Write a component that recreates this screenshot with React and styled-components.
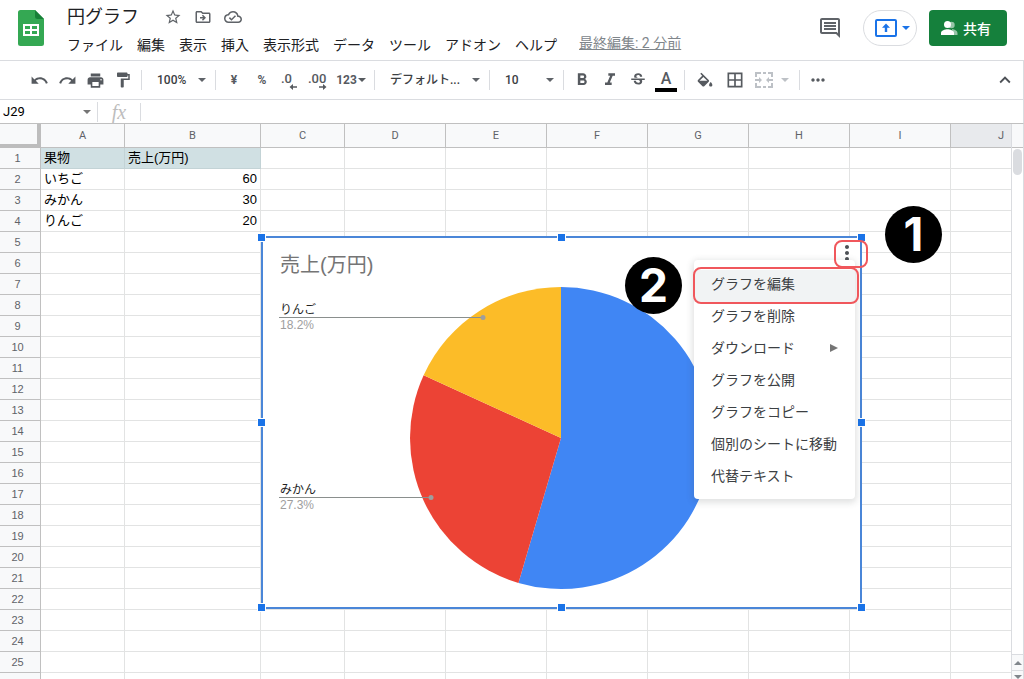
import { useState } from "react";
import styled, { createGlobalStyle } from "styled-components";
import {
    MdUndo, MdRedo, MdPrint, MdFormatPaint, MdFormatBold, MdFormatItalic, MdStrikethroughS,
    MdBorderAll, MdMoreHoriz, MdMoreVert, MdKeyboardArrowUp,
    MdStarBorder, MdOutlineDriveFileMove, MdOutlineCloudDone, MdOutlineComment,
} from "react-icons/md";

const MENUS = ["ファイル", "編集", "表示", "挿入", "表示形式", "データ", "ツール", "アドオン", "ヘルプ"];

const COLUMNS = [
    { name: "A", width: 84 },
    { name: "B", width: 136 },
    { name: "C", width: 84 },
    { name: "D", width: 101 },
    { name: "E", width: 101 },
    { name: "F", width: 101 },
    { name: "G", width: 101 },
    { name: "H", width: 101 },
    { name: "I", width: 101 },
    { name: "J", width: 101 },
];

const ROWS = Array.from({ length: 26 }, (_, i) => i + 1);

const CELLS = {
    A1: "果物", B1: "売上(万円)",
    A2: "いちご", B2: 60,
    A3: "みかん", B3: 30,
    A4: "りんご", B4: 20,
};

const SLICES = [
    { name: "いちご", value: 60, color: "#4086f4" },
    { name: "みかん", value: 30, color: "#ec4335", label: { y: 258, x: 168 } },
    { name: "りんご", value: 20, color: "#fcbc28", label: { y: 78, x: 220 } },
];

const CHART_MENU = [
    "グラフを編集", "グラフを削除", "ダウンロード", "グラフを公開",
    "グラフをコピー", "個別のシートに移動", "代替テキスト",
];

const HANDLES = [
    [0, 0], [50, 0], [100, 0],
    [0, 50], [100, 50],
    [0, 100], [50, 100], [100, 100],
];

function Caret({ up }) {
    return (
        <svg width="8" height="4" viewBox="0 0 8 4" fill="currentColor" aria-hidden="true">
            <path d={up ? "M0 4h8L4 0z" : "M0 0h8L4 4z"} />
        </svg>
    );
}

function SheetsLogo() {
    return (
        <svg width="26" height="36" viewBox="0 0 26 36" aria-hidden="true">
            <path d="M2.5 0H17l9 9v24.500a2.500 2.500 0 0 1-2.500 2.500h-21A2.500 2.500 0 0 1 0 33.500v-31A2.500 2.500 0 0 1 2.500 0z" fill="#34a853" />
            <path d="M17 0l9 9h-6.500A2.500 2.500 0 0 1 17 6.500z" fill="#188038" />
            <path d="M5 14v12h16V14zm2 2h5v3H7zm7 0h5v3h-5zm-7 5h5v3H7zm7 0h5v3h-5z" fill="#fff" fillRule="evenodd" />
        </svg>
    );
}

function PresentIcon() {
    return (
        <svg width="22" height="18" viewBox="0 0 22 18" aria-hidden="true">
            <rect x="1" y="1" width="20" height="16" rx="1" fill="none" stroke="#1a73e8" strokeWidth="2" />
            <path d="M11 4.500l4 4.200h-2.800V13H9.800V8.700H7z" fill="#1a73e8" />
        </svg>
    );
}

function PeopleIcon() {
    return (
        <svg width="17" height="14" viewBox="0 0 17 14" fill="#fff" aria-hidden="true">
            <g opacity=".55">
                <circle cx="10.500" cy="4" r="3.200" />
                <path d="M11 8c3 .5 5.500 2 5.500 4v2H12z" />
            </g>
            <circle cx="6.500" cy="3.500" r="3.500" />
            <path d="M0 14v-2.200C0 9.400 4 8.200 6.500 8.200S13 9.400 13 11.800V14z" />
        </svg>
    );
}

function FillIcon() {
    return (
        <svg width="18" height="18" viewBox="1 -2 22 22" fill="currentColor" aria-hidden="true">
            <path d="M16.560 8.940L7.620 0 6.210 1.410l2.380 2.380-5.150 5.150c-.59.59-.59 1.540 0 2.120l5.500 5.500c.29.29.68.44 1.060.44s.77-.15 1.060-.44l5.500-5.500c.59-.58.59-1.530 0-2.120zM5.210 10L10 5.210 14.790 10H5.210zM19 11.500s-2 2.170-2 3.500c0 1.100.9 2 2 2s2-.9 2-2c0-1.330-2-3.500-2-3.500z" />
        </svg>
    );
}

function DecimalIcon({ more }) {
    return (
        <svg width="20" height="20" viewBox="0 0 20 20" fill="currentColor" aria-hidden="true">
            <text x={more ? 0 : 1} y="13" fontFamily="Roboto, sans-serif" fontSize="13" fontWeight="500">
                {more ? ".00" : ".0"}
            </text>
            <path d={more ? "M11 16.200h4v-2.200l3.500 3-3.500 3v-2.200h-4z" : "M17 16.200h-4v-2.200l-3.500 3 3.500 3v-2.200h4z"} />
        </svg>
    );
}

function MergeIcon() {
    return (
        <svg width="18" height="16" viewBox="0 0 18 16" fill="none" stroke="currentColor" strokeWidth="2" aria-hidden="true">
            <path d="M1 5V1h5M8 1h3M13 1h4v4M17 11v4h-4M11 15H8M6 15H1v-4" />
            <path d="M0 8h5M18 8h-5" />
            <path d="M4 5l3 3-3 3zM14 5l-3 3 3 3z" fill="currentColor" stroke="none" />
        </svg>
    );
}

function PieChart() {
    const total = SLICES.reduce((sum, slice) => sum + slice.value, 0);
    const cx = 298;
    const cy = 199;
    const r = 151;
    const point = (part) => {
        const angle = part * Math.PI * 2;
        return `${cx + r * Math.sin(angle)} ${cy - r * Math.cos(angle)}`;
    };
    let start = 0;
    const paths = SLICES.map((slice) => {
        const share = slice.value / total;
        const d = `M${cx} ${cy}L${point(start)}A${r} ${r} 0 ${share > 0.5 ? 1 : 0} 1 ${point(start + share)}z`;
        start += share;
        return { ...slice, d, percent: (share * 100).toFixed(1) + "%" };
    });

    return (
        <ChartDrawing viewBox="0 0 597 368">
            <text x="17" y="33" fontSize="20" fill="#757575">売上(万円)</text>
            {paths.map((slice) => <path key={slice.name} d={slice.d} fill={slice.color} />)}
            {paths.filter((slice) => slice.label).map(({ name, percent, label }) => (
                <g key={name}>
                    <text x="17" y={label.y - 3} fontSize="12" fill="#222">{name}</text>
                    <path d={`M16 ${label.y + 0.5}H${label.x}`} stroke="#8a8f8d" />
                    <circle cx={label.x} cy={label.y + 0.5} r="2.500" fill="#9e9e9e" />
                    <text x="17" y={label.y + 12} fontSize="12" fill="#9e9e9e">{percent}</text>
                </g>
            ))}
        </ChartDrawing>
    );
}

function Header() {
    return (
        <HeaderBar>
            <SheetsLogo />
            <TitleArea>
                <TitleRow>
                    <Title>円グラフ</Title>
                    <TitleButton aria-label="スター"><MdStarBorder size={18} /></TitleButton>
                    <TitleButton aria-label="移動"><MdOutlineDriveFileMove size={18} /></TitleButton>
                    <TitleButton aria-label="保存状況"><MdOutlineCloudDone size={18} /></TitleButton>
                </TitleRow>
                <MenuRow>
                    {MENUS.map((menu) => <MenuButton key={menu}>{menu}</MenuButton>)}
                    <LastEdit href="#history">最終編集: 2 分前</LastEdit>
                </MenuRow>
            </TitleArea>
            <HeaderActions>
                <CommentButton aria-label="コメント"><MdOutlineComment size={24} /></CommentButton>
                <PresentButton aria-label="プレゼンテーション"><PresentIcon /><Caret /></PresentButton>
                <ShareButton><PeopleIcon />共有</ShareButton>
            </HeaderActions>
        </HeaderBar>
    );
}

function ToolSelect({ label, value, $width }) {
    return (
        <SelectBox $width={$width}>
            <select aria-label={label} defaultValue={value}>
                <option>{value}</option>
            </select>
            <Caret />
        </SelectBox>
    );
}

function Toolbar() {
    return (
        <ToolbarRow>
            <Tool aria-label="元に戻す"><MdUndo size={19} /></Tool>
            <Tool aria-label="やり直し"><MdRedo size={19} /></Tool>
            <Tool aria-label="印刷"><MdPrint size={19} /></Tool>
            <Tool aria-label="書式を貼り付け"><MdFormatPaint size={18} /></Tool>
            <Divider />
            <ToolSelect label="ズーム" value="100%" $width={65} />
            <Divider />
            <Tool>¥</Tool>
            <Tool>%</Tool>
            <Tool aria-label="小数点以下の桁数を減らす"><DecimalIcon /></Tool>
            <Tool aria-label="小数点以下の桁数を増やす"><DecimalIcon more /></Tool>
            <Tool $width={38}>123<Caret /></Tool>
            <Divider />
            <ToolSelect label="フォント" value="デフォルト..." $width={106} />
            <Divider />
            <ToolSelect label="フォントサイズ" value="10" $width={65} />
            <Divider />
            <Tool aria-label="太字"><MdFormatBold size={20} /></Tool>
            <Tool aria-label="斜体"><MdFormatItalic size={20} /></Tool>
            <Tool aria-label="取り消し線"><MdStrikethroughS size={18} /></Tool>
            <Tool aria-label="テキストの色"><TextColor>A</TextColor></Tool>
            <Divider />
            <Tool $width={32} aria-label="塗りつぶしの色"><FillIcon /></Tool>
            <Tool $width={28} aria-label="枠線"><MdBorderAll size={20} /></Tool>
            <Tool $width={46} $spread disabled aria-label="セルを結合"><MergeIcon /><Caret /></Tool>
            <Divider />
            <Tool aria-label="その他"><MdMoreHoriz size={20} /></Tool>
            <CollapseButton aria-label="メニューを非表示"><MdKeyboardArrowUp size={22} /></CollapseButton>
        </ToolbarRow>
    );
}

function FormulaBar() {
    return (
        <FormulaRow>
            <NameBox>
                <input aria-label="名前ボックス" defaultValue="J29" />
                <Caret />
            </NameBox>
            <FxLabel htmlFor="formula">fx</FxLabel>
            <FormulaInput id="formula" />
        </FormulaRow>
    );
}

function Grid() {
    return (
        <Table>
            <colgroup>
                <col width="41" />
                {COLUMNS.map((col) => <col key={col.name} width={col.width} />)}
            </colgroup>
            <thead>
                <tr>
                    <Corner />
                    {COLUMNS.map((col) => (
                        <ColumnHead key={col.name} scope="col" $active={col.name === "J"}>{col.name}</ColumnHead>
                    ))}
                </tr>
            </thead>
            <tbody>
                {ROWS.map((row) => (
                    <tr key={row}>
                        <RowHead scope="row">{row}</RowHead>
                        {COLUMNS.map((col) => {
                            const value = CELLS[col.name + row];
                            return (
                                <Cell
                                    key={col.name}
                                    $number={typeof value === "number"}
                                    $filled={row === 1 && value !== undefined}
                                >
                                    {value}
                                </Cell>
                            );
                        })}
                    </tr>
                ))}
            </tbody>
        </Table>
    );
}

export default function App() {
    const [menuOpen, setMenuOpen] = useState(true);

    return (
        <Page>
            <GlobalStyle />
            <Header />
            <Toolbar />
            <FormulaBar />
            <SheetArea>
                <Sheet>
                    <Grid />
                    <Chart>
                        <PieChart />
                        {HANDLES.map(([x, y]) => <Handle key={`${x}-${y}`} $x={x} $y={y} />)}
                        <ChartMenuButton aria-label="グラフのメニュー" onClick={() => setMenuOpen(!menuOpen)}>
                            <MdMoreVert size={24} />
                        </ChartMenuButton>
                        {menuOpen && (
                            <ChartMenu>
                                {CHART_MENU.map((item, index) => (
                                    <ChartMenuItem key={item} $active={index === 0}>
                                        {item}
                                        {item === "ダウンロード" && (
                                            <svg width="8" height="8" viewBox="0 0 8 8" fill="#757575" aria-hidden="true">
                                                <path d="M0 0l8 4-8 4z" />
                                            </svg>
                                        )}
                                    </ChartMenuItem>
                                ))}
                            </ChartMenu>
                        )}
                    </Chart>
                    <Frame $left={834} $top={116} $width={34} $height={28} />
                    <Frame $left={693} $top={143} $width={166} $height={37} />
                    <Step $left={885} $top={82}>1</Step>
                    <Step $left={625} $top={133}>2</Step>
                </Sheet>
                <Scrollbar>
                    <ScrollHead />
                    <ScrollTrack><ScrollThumb /></ScrollTrack>
                    <ScrollButton aria-label="上へスクロール"><Caret up /></ScrollButton>
                    <ScrollButton aria-label="下へスクロール" $cut><Caret /></ScrollButton>
                </Scrollbar>
            </SheetArea>
        </Page>
    );
}

const GlobalStyle = createGlobalStyle`
    * {
        box-sizing: border-box;
    }
    body {
        margin: 0;
        background-color: #fff;
        font-family: Roboto, 'Noto Sans CJK JP', sans-serif;
        color: #202124;
    }
    button, input, select {
        font: inherit;
        color: inherit;
        border: none;
        padding: 0;
        background-color: transparent;
    }
    svg {
        display: block;
        flex-shrink: 0;
    }
`;

const Page = styled.div`
    display: flex;
    flex-direction: column;
    height: 100vh;
    overflow: hidden;
`;

const HeaderBar = styled.header`
    display: flex;
    align-items: flex-start;
    padding: 10px 17px 0 18px;
    height: 60px;
    flex-shrink: 0;
`;

const TitleArea = styled.div`
    margin-top: -6px;
    margin-left: 23px;
`;

const TitleRow = styled.div`
    display: flex;
    align-items: center;
    height: 26px;
    gap: 12px;
`;

const Title = styled.h1`
    margin: 0 13px 0 0;
    font-size: 18px;
    line-height: 24px;
    font-weight: 400;
`;

const TitleButton = styled.button`
    color: #5f6368;
`;

const MenuRow = styled.nav`
    display: flex;
    align-items: center;
    height: 30px;
    gap: 14px;
    white-space: nowrap;
`;

const MenuButton = styled.button`
    font-size: 14px;
    line-height: 20px;
`;

const LastEdit = styled.a`
    margin-left: 8px;
    padding-bottom: 4px;
    font-size: 14px;
    line-height: 20px;
    color: #80868b;
`;

const HeaderActions = styled.div`
    display: flex;
    align-items: center;
    gap: 12px;
    margin-left: auto;
`;

const CommentButton = styled.button`
    margin-right: 9px;
    color: #5f6368;
`;

const PresentButton = styled.button`
    display: flex;
    align-items: center;
    justify-content: flex-end;
    gap: 5px;
    width: 54px;
    height: 36px;
    padding-right: 6px;
    border: 1px solid #dadce0;
    border-radius: 18px;
    color: #1a73e8;
`;

const ShareButton = styled.button`
    display: flex;
    align-items: center;
    justify-content: center;
    gap: 5px;
    width: 78px;
    height: 36px;
    padding-right: 4px;
    border-radius: 4px;
    background-color: #15803c;
    color: #fff;
    font-size: 14px;
    font-weight: 500;
`;

const ToolbarRow = styled.div`
    display: flex;
    align-items: center;
    flex-shrink: 0;
    height: 40px;
    padding: 0 7px 0 25px;
    border: solid #dadce0;
    border-width: 1px 1px 1px 0;
    color: #5f6368;
    font-size: 12px;
    font-weight: 500;
`;

const Tool = styled.button`
    display: flex;
    align-items: center;
    justify-content: ${({ $spread }) => ($spread ? "space-between" : "center")};
    gap: 1px;
    width: ${({ $width }) => $width || 28}px;
    height: 28px;
    padding: 0 ${({ $spread }) => ($spread ? 6 : 0)}px;
    color: ${({ disabled }) => (disabled ? "#bdc1c6" : "#565a5f")};
    font-size: 12px;
    font-weight: 700;
`;

const Divider = styled.span`
    width: 1px;
    height: 20px;
    margin: 0 4px;
    background-color: #dadce0;
`;

const SelectBox = styled.span`
    display: flex;
    align-items: center;
    width: ${({ $width }) => $width}px;
    padding: 0 5px 0 11px;

    select {
        flex: 1;
        min-width: 0;
        appearance: none;
        outline: none;
        color: #3c4043;
    }
`;

const TextColor = styled.span`
    width: 22px;
    border-bottom: 4px solid #000;
    font-size: 16px;
    line-height: 18px;
    font-weight: 500;
    padding-top: 2px;
`;

const CollapseButton = styled.button`
    margin-left: auto;
    color: #4d5156;
`;

const FormulaRow = styled.div`
    display: flex;
    align-items: center;
    flex-shrink: 0;
    height: 23px;
    border-right: 1px solid #dadce0;
`;

const NameBox = styled.div`
    display: flex;
    align-items: center;
    width: 98px;
    height: 20px;
    padding: 0 6px 0 3px;
    border-right: 1px solid #dadce0;
    color: #757575;

    input {
        flex: 1;
        min-width: 0;
        color: #000;
        font-size: 13px;
        outline: none;
    }
`;

const FxLabel = styled.label`
    width: 42px;
    text-align: center;
    font-family: 'Liberation Serif', serif;
    font-style: italic;
    font-size: 20px;
    line-height: 20px;
    color: #bdbdbd;
`;

const FormulaInput = styled.input`
    flex: 1;
    height: 18px;
    padding-left: 6px;
    border-left: 1px solid #dadce0;
    outline: none;
    font-size: 13px;
`;

const SheetArea = styled.main`
    display: flex;
    flex: 1;
    min-height: 0;
    border-top: 1px solid #c0c0c0;
    border-right: 1px solid #dadce0;
`;

const Sheet = styled.div`
    position: relative;
    flex: 1;
    min-width: 0;
    overflow: hidden;
`;

const Table = styled.table`
    width: 1037px;
    table-layout: fixed;
    border-collapse: separate;
    border-spacing: 0;
`;

const Corner = styled.td`
    height: 24px;
    padding: 0;
    background-color: #f8f9fa;
    border-right: 4px solid #bdbdbd;
    border-bottom: 4px solid #bdbdbd;
`;

const ColumnHead = styled.th`
    height: 24px;
    padding: 0;
    border-right: 1px solid #c0c0c0;
    border-bottom: 1px solid #c0c0c0;
    background-color: ${({ $active }) => ($active ? "#e8eaed" : "#f8f9fa")};
    color: #5f6368;
    font-size: 11px;
    line-height: 14px;
    font-weight: 400;
`;

const RowHead = styled.th`
    height: 21px;
    padding: 0 5px 0 0;
    border-right: 1px solid #c0c0c0;
    border-bottom: 1px solid #c0c0c0;
    background-color: #f8f9fa;
    color: #5f6368;
    font-family: 'Liberation Sans', sans-serif;
    font-size: 11px;
    line-height: 14px;
    font-weight: 400;
`;

const Cell = styled.td`
    height: 21px;
    padding: 0 3px;
    border-right: 1px solid;
    border-bottom: 1px solid;
    border-color: ${({ $filled }) => ($filled ? "#c3d3d6" : "#e2e3e3")};
    background-color: ${({ $filled }) => ($filled ? "#d0e0e3" : "#fff")};
    color: #000;
    font-family: 'Liberation Sans', 'Noto Sans CJK JP', sans-serif;
    font-size: 13px;
    line-height: 18px;
    text-align: ${({ $number }) => ($number ? "right" : "left")};
    white-space: nowrap;
`;

const Chart = styled.section`
    position: absolute;
    left: 261px;
    top: 112px;
    width: 601px;
    height: 373px;
    padding-top: 1px;
    border: 2px solid #4a86d8;
    background-color: #fff;
`;

const ChartDrawing = styled.svg`
    width: 100%;
    font-family: 'Liberation Sans', 'Noto Sans CJK JP', sans-serif;
`;

const Handle = styled.span`
    position: absolute;
    left: ${({ $x }) => $x}%;
    top: ${({ $y }) => $y}%;
    width: 9px;
    height: 9px;
    margin-left: ${({ $x }) => ($x === 0 ? -6 : $x === 100 ? -3 : -5)}px;
    margin-top: ${({ $y }) => ($y === 0 ? -5 : $y === 100 ? -4 : -5)}px;
    border: 1px solid #fff;
    background-color: #1a73e8;
`;

const ChartMenuButton = styled.button`
    position: absolute;
    top: 3px;
    right: 1px;
    color: #4d5156;
`;

const ChartMenu = styled.div`
    position: absolute;
    top: 22px;
    right: 5px;
    width: 161px;
    padding: 10px 0 5px;
    border-radius: 4px;
    background-color: #fff;
    box-shadow: 0 2px 6px 2px rgba(60, 64, 67, 0.15);
`;

const ChartMenuItem = styled.button`
    display: flex;
    align-items: center;
    justify-content: space-between;
    width: 100%;
    height: 32px;
    padding: 0 17px 4px;
    background-color: ${({ $active }) => ($active ? "#f1f3f4" : "#fff")};
    color: #3c4043;
    font-size: 14px;
    line-height: 20px;
    white-space: nowrap;
`;

const Frame = styled.span`
    position: absolute;
    left: ${({ $left }) => $left}px;
    top: ${({ $top }) => $top}px;
    width: ${({ $width }) => $width}px;
    height: ${({ $height }) => $height}px;
    border: 2px solid #f0575c;
    border-radius: 8px;
    pointer-events: none;
`;

const Step = styled.span`
    position: absolute;
    left: ${({ $left }) => $left}px;
    top: ${({ $top }) => $top}px;
    width: 57px;
    height: 57px;
    border-radius: 50%;
    background-color: #000;
    color: #fff;
    font-family: Inter, sans-serif;
    font-size: 46px;
    line-height: 57px;
    font-weight: 700;
    text-align: center;
`;

const Scrollbar = styled.div`
    display: flex;
    flex-direction: column;
    width: 12px;
    border-left: 1px solid #dadce0;
`;

const ScrollHead = styled.div`
    height: 24px;
    border-bottom: 1px solid #c0c0c0;
    background-color: #f8f9fa;
`;

const ScrollTrack = styled.div`
    flex: 1;
    padding: 1px;
`;

const ScrollThumb = styled.div`
    height: 26px;
    border-radius: 5px;
    background-color: #dadce0;
`;

const ScrollButton = styled.button`
    display: flex;
    align-items: ${({ $cut }) => ($cut ? "flex-end" : "center")};
    justify-content: center;
    height: ${({ $cut }) => ($cut ? 9 : 16)}px;
    border-top: 1px solid #dadce0;
    background-color: #f8f9fa;
    color: #80868b;
`;
